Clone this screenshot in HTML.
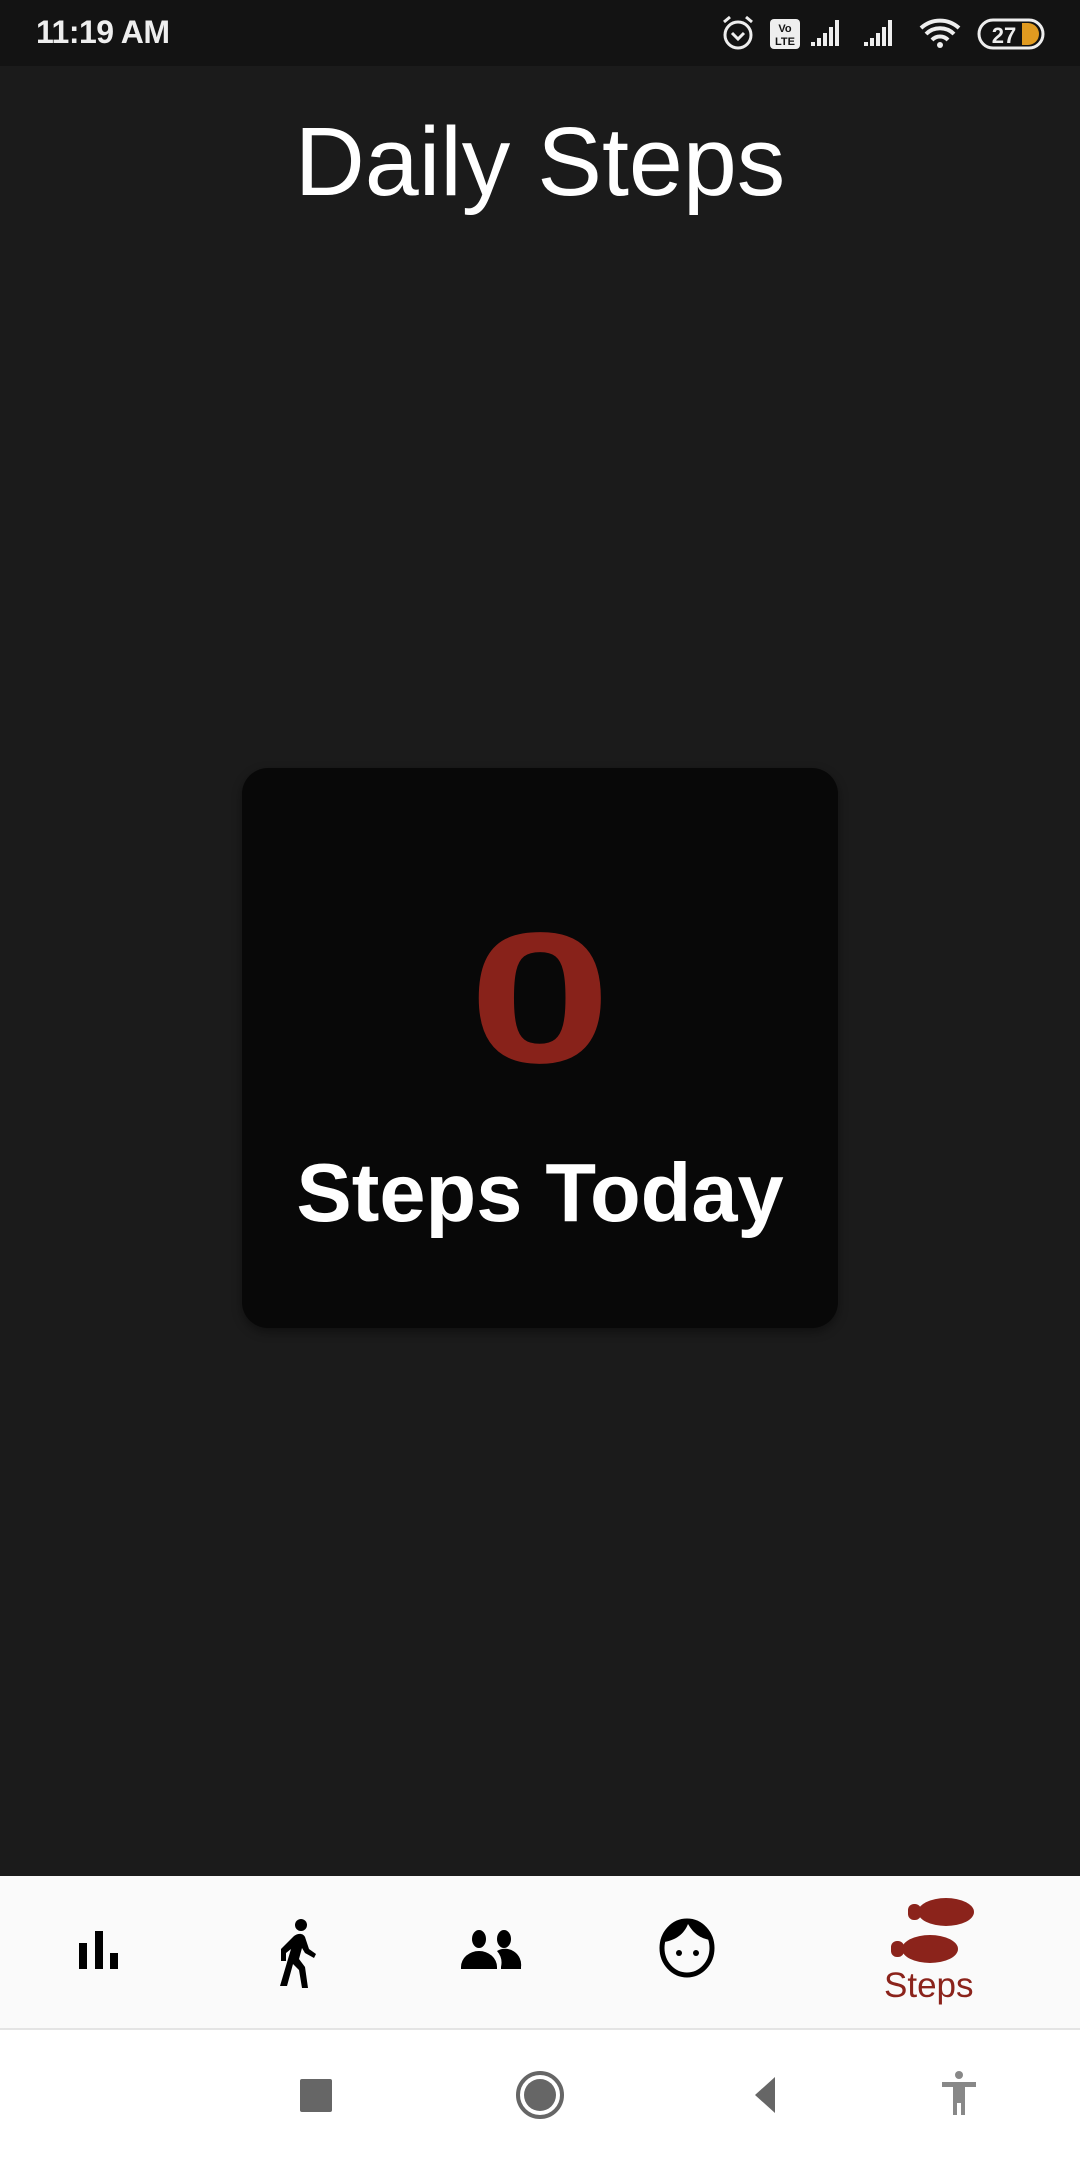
<!DOCTYPE html>
<html><head><meta charset="utf-8"><style>
*{margin:0;padding:0;box-sizing:border-box}
body{width:1080px;height:2160px;background:#1b1b1b;position:relative;overflow:hidden;font-family:"Liberation Sans",sans-serif}
.status{position:absolute;left:0;top:0;width:1080px;height:66px;background:#131313}
.time{position:absolute;left:36px;top:14px;color:#eee;font-size:32px;font-weight:bold;letter-spacing:-0.5px}
.title{position:absolute;left:0;width:1080px;top:104px;text-align:center;color:#fff;font-size:97px;font-weight:300;letter-spacing:0px;line-height:1.2}
.card{position:absolute;left:242px;top:768px;width:596px;height:560px;background:#080808;border-radius:26px;box-shadow:0 4px 10px rgba(0,0,0,.4)}
.zero{position:absolute;left:0;width:596px;top:138px;text-align:center;color:#88221a;font-size:186px;font-weight:bold;line-height:1;transform:scaleX(1.38)}
.st{position:absolute;left:0;width:596px;top:383px;text-align:center;color:#fff;font-size:83px;font-weight:bold;line-height:1}
.nav{position:absolute;left:0;top:1876px;width:1080px;height:154px;background:#fafafa;border-bottom:2px solid #e4e4e4}
.sys{position:absolute;left:0;top:2030px;width:1080px;height:130px;background:#fff}
.lbl{position:absolute;left:884px;top:1966px;color:#8b231b;font-size:35px}
</style></head><body>
<div class="status">
<div class="time">11:19 AM</div>
<svg style="position:absolute;left:718px;top:14px" width="330" height="40" viewBox="0 0 330 40">
<circle cx="20" cy="21" r="13" fill="none" stroke="#eee" stroke-width="3"/><path d="M14 19l6 6 6-6" stroke="#eee" stroke-width="3" fill="none"/>
<path d="M6 8l6-5M34 8l-6-5" stroke="#eee" stroke-width="3"/>
<rect x="52" y="5" width="30" height="30" rx="4" fill="#eee"/><text x="67" y="18" font-size="11" font-weight="bold" text-anchor="middle" fill="#131313" font-family="Liberation Sans">Vo</text><text x="67" y="31" font-size="11" font-weight="bold" text-anchor="middle" fill="#131313" font-family="Liberation Sans">LTE</text>
<path d="M93 32h4v-4h-4zM99 32h4v-8h-4zM105 32h4v-13h-4zM111 32h4v-19h-4zM117 32h4v-26h-4z" fill="#eee"/>
<path d="M146 32h4v-4h-4zM152 32h4v-8h-4zM158 32h4v-13h-4zM164 32h4v-19h-4zM170 32h4v-26h-4z" fill="#eee"/>
<path d="M203 14a28 28 0 0 1 38 0M208 20a20 20 0 0 1 28 0M214 26a11 11 0 0 1 16 0" stroke="#eee" stroke-width="4" fill="none"/><circle cx="222" cy="31" r="3" fill="#eee"/>
<rect x="261" y="6" width="64" height="28" rx="14" fill="none" stroke="#eee" stroke-width="3"/><path d="M304 9h6a11 11 0 0 1 0 22h-6z" fill="#e09a20"/>
<text x="286" y="29" font-size="22" font-weight="bold" text-anchor="middle" fill="#eee" font-family="Liberation Sans">27</text>
</svg>
</div>
<div class="title">Daily Steps</div>
<div class="card"><div class="zero">0</div><div class="st">Steps Today</div></div>
<div class="nav"></div>
<svg style="position:absolute;left:0;top:1876px" width="1080" height="154" viewBox="0 0 1080 154">
<path d="M79 67h8v26h-8zM95 55h8v38h-8zM110 77h8v16h-8z" fill="#000"/>
<circle cx="301" cy="49" r="6" fill="#000"/>
<path d="M294 60c4-3 9-3 11 1l4 12 7 5-2 4-9-5-3-5-3 11 6 8 3 21h-6l-3-18-6-6-6 22h-7l8-27 3-10-5 4v8h-5v-12z" fill="#000"/>
<ellipse cx="479" cy="63" rx="7" ry="9" fill="#000"/><ellipse cx="504" cy="63" rx="7" ry="9" fill="#000"/>
<path d="M461 91a18 16 0 0 1 36 0v2h-36zM497 75a16 16 0 0 1 24 16v2h-20v-2a18 18 0 0 0-4-16z" fill="#000"/>
<ellipse cx="687" cy="72" rx="25" ry="27" fill="none" stroke="#000" stroke-width="5"/>
<path d="M664 66c12-2 20-8 24-18c6 10 12 14 22 16l-2-10c-6-8-14-10-21-10s-17 4-21 12z" fill="#000"/>
<circle cx="679" cy="77" r="3" fill="#000"/><circle cx="696" cy="77" r="3" fill="#000"/>
<ellipse cx="946" cy="36" rx="28" ry="14" fill="#8b231b"/><rect x="908" y="28" width="13" height="16" rx="6" fill="#8b231b"/>
<ellipse cx="930" cy="73" rx="28" ry="14" fill="#8b231b"/><rect x="891" y="65" width="13" height="16" rx="6" fill="#8b231b"/>
</svg>
<div class="lbl">Steps</div>
<div class="sys"></div>
<svg style="position:absolute;left:0;top:2030px" width="1080" height="130" viewBox="0 0 1080 130">
<rect x="300" y="49" width="32" height="33" rx="2" fill="#666"/>
<circle cx="540" cy="65" r="22" fill="none" stroke="#666" stroke-width="4"/><circle cx="540" cy="65" r="16" fill="#666"/>
<path d="M775 47v36l-20-18z" fill="#666"/>
<circle cx="959" cy="45" r="4" fill="#888"/><path d="M942 52h34v5h-11v28h-4v-12h-4v12h-4v-28h-11z" fill="#888"/>
</svg>
</body></html>
